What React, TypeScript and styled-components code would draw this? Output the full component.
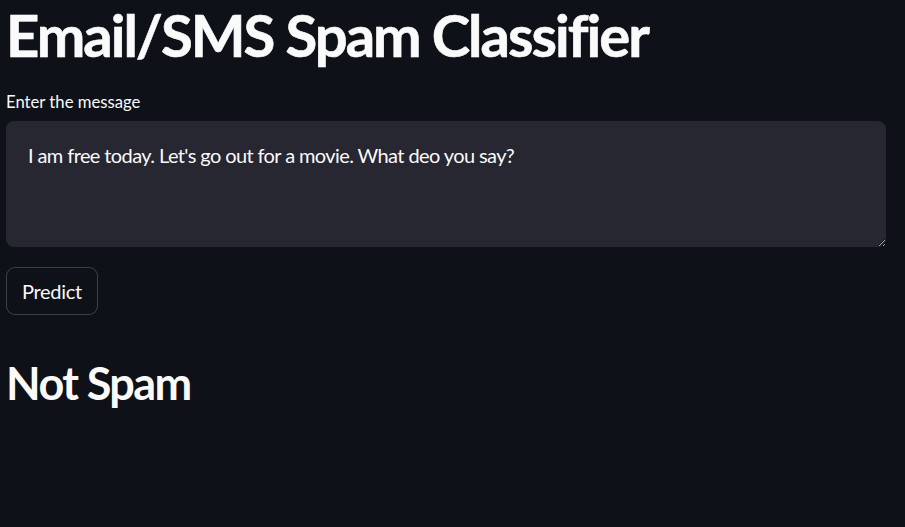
import React from "react";
import styled, { createGlobalStyle } from "styled-components";

const Global = createGlobalStyle`
  html, body { margin: 0; padding: 0; background: #0e1117; color-scheme: dark; }
  body { font-family: "Lato", "Noto Sans", sans-serif; color: #fafafa; }
  * { box-sizing: border-box; }
`;

const Page = styled.main`
  min-height: 527px;
  padding: 0 19px 0 6px;
  display: flex;
  flex-direction: column;
`;

const Title = styled.h1`
  margin: 0;
  padding-top: 4px;
  font-size: 58px;
  font-weight: 700;
  line-height: 62px;
  letter-spacing: -2px;
  color: #fafafa;
  -webkit-text-stroke: 0.6px #fafafa;
`;

const Label = styled.label`
  margin-top: 26px;
  font-size: 16.7px;
  line-height: 20px;
  color: #fafafa;
`;

const Area = styled.textarea`
  margin-top: 9px;
  width: 880px;
  height: 126px;
  border: none;
  border-radius: 8px;
  background: #262730;
  color: #fafafa;
  font-family: inherit;
  font-size: 20px;
  line-height: 28px;
  letter-spacing: -0.6px;
  padding: 20px 22px;
  resize: vertical;
  outline: none;
`;

const Button = styled.button`
  margin-top: 20px;
  align-self: flex-start;
  height: 48px;
  padding: 0 15px;
  border: 1px solid rgba(250, 250, 250, 0.2);
  border-radius: 9px;
  background: #0e1117;
  color: #fafafa;
  font-family: inherit;
  font-size: 20px;
  letter-spacing: -0.3px;
`;

const Result = styled.h2`
  margin: 40px 0 0;
  font-size: 45px;
  font-weight: 700;
  line-height: 56px;
  letter-spacing: -1.6px;
  color: #fafafa;
`;

export default function App() {
  return (
    <>
      <Global />
      <Page>
        <Title>Email/SMS Spam Classifier</Title>
        <Label htmlFor="msg">Enter the message</Label>
        <Area
          id="msg"
          defaultValue="I am free today. Let's go out for a movie. What deo you say?"
        />
        <Button>Predict</Button>
        <Result>Not Spam</Result>
      </Page>
    </>
  );
}
